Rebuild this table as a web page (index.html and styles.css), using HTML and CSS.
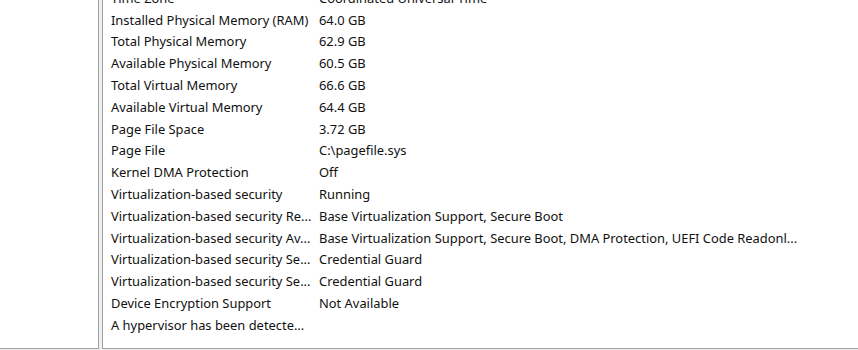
FILE: index.html
```html
<!DOCTYPE html>
<html lang="en">
<head>
    <meta charset="UTF-8">
    <title>System Information</title>
    <link rel="stylesheet" href="styles.css">
</head>
<body>
    <div class="window">
        <div class="tree-pane"></div>
        <div class="list-pane">
            <div class="list">
                <div class="row"><span class="item">Time Zone</span><span class="value">Coordinated Universal Time</span></div>
                <div class="row"><span class="item">Installed Physical Memory (RAM)</span><span class="value">64.0 GB</span></div>
                <div class="row"><span class="item">Total Physical Memory</span><span class="value">62.9 GB</span></div>
                <div class="row"><span class="item">Available Physical Memory</span><span class="value">60.5 GB</span></div>
                <div class="row"><span class="item">Total Virtual Memory</span><span class="value">66.6 GB</span></div>
                <div class="row"><span class="item">Available Virtual Memory</span><span class="value">64.4 GB</span></div>
                <div class="row"><span class="item">Page File Space</span><span class="value">3.72 GB</span></div>
                <div class="row"><span class="item">Page File</span><span class="value">C:\pagefile.sys</span></div>
                <div class="row"><span class="item">Kernel DMA Protection</span><span class="value">Off</span></div>
                <div class="row"><span class="item">Virtualization-based security</span><span class="value">Running</span></div>
                <div class="row"><span class="item">Virtualization-based security Re...</span><span class="value">Base Virtualization Support, Secure Boot</span></div>
                <div class="row"><span class="item">Virtualization-based security Av...</span><span class="value">Base Virtualization Support, Secure Boot, DMA Protection, UEFI Code Readonl...</span></div>
                <div class="row"><span class="item">Virtualization-based security Se...</span><span class="value">Credential Guard</span></div>
                <div class="row"><span class="item">Virtualization-based security Se...</span><span class="value">Credential Guard</span></div>
                <div class="row"><span class="item">Device Encryption Support</span><span class="value">Not Available</span></div>
                <div class="row"><span class="item">A hypervisor has been detecte...</span><span class="value"></span></div>
            </div>
        </div>
    </div>
</body>
</html>
```

FILE: styles.css
```css
body {
    margin: 0;
    background-color: #f0f0f0;
    font-family: "Noto Sans", "Open Sans", sans-serif;
    font-size: 12.9px;
    color: #111;
    overflow: hidden;
}
.window {
    display: flex;
    height: 349px;
    gap: 3px;
}
.tree-pane {
    width: 98px;
    background-color: white;
    border-right: 1px solid #a0a0a0;
    border-bottom: 1px solid #a0a0a0;
}
.list-pane {
    flex: 1;
    background-color: white;
    border-left: 1px solid #a0a0a0;
    border-bottom: 1px solid #a0a0a0;
    overflow: hidden;
}
.list {
    margin-top: -13px;
    padding-left: 8px;
}
.row {
    display: flex;
    height: 21.8px;
    align-items: center;
    white-space: nowrap;
}
.item {
    width: 208px;
}
```
